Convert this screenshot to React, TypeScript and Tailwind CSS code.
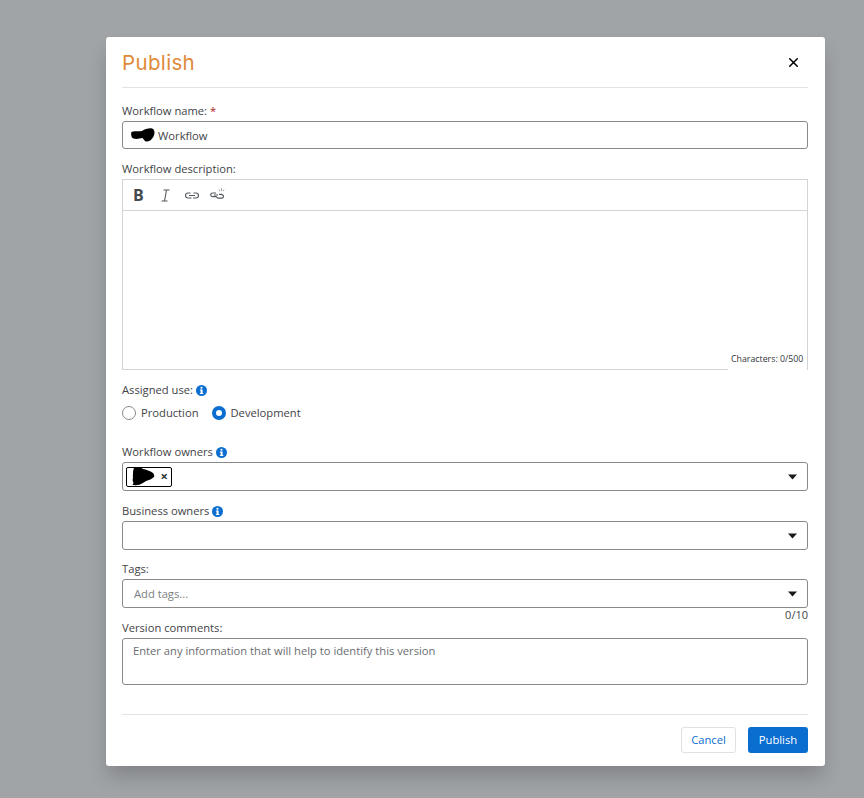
import React from 'react';
import { X } from 'lucide-react';

function Info() {
  return (
    <svg width="11" height="11" viewBox="0 0 12 12" className="shrink-0">
      <circle cx="6" cy="6" r="6" fill="#0a6ed1" />
      <rect x="5" y="5" width="2.2" height="4.6" fill="#fff" />
      <rect x="4.2" y="5" width="2" height="1" fill="#fff" />
      <rect x="4.2" y="8.8" width="3.8" height="1" fill="#fff" />
      <circle cx="6" cy="3" r="1.2" fill="#fff" />
    </svg>
  );
}

function Caret() {
  return (
    <svg width="9" height="6" viewBox="0 0 9 6" className="shrink-0">
      <path d="M0 0.5h9L4.5 5.5z" fill="#1a1a1a" />
    </svg>
  );
}

function Label({ children, className = '' }: { children: React.ReactNode; className?: string }) {
  return <div className={`flex items-center gap-[3px] h-4 text-[11.2px] leading-4 text-[#3f4347] ${className}`}>{children}</div>;
}

function SelectBox({ height, children }: { height: string; children?: React.ReactNode }) {
  return (
    <div className={`flex items-center justify-between rounded-[3px] border border-[#87898b] pl-[3px] pr-[10px] ${height}`}>
      <div className="flex items-center min-w-0">{children}</div>
      <Caret />
    </div>
  );
}

export default function App() {
  return (
    <div className="h-[798px] w-[864px] overflow-hidden bg-[#a1a4a7] pl-[106px] pt-[37px] font-['Open_Sans',sans-serif]">
      <div className="h-[729px] w-[719px] rounded-[3px] bg-white pl-4 pr-[17px] shadow-[0_12px_20px_-2px_rgba(0,0,0,0.2)]">
        <div className="flex h-[51px] items-center justify-between border-b border-[#e2e3e4]">
          <span className="pt-[3px] font-['Inter',sans-serif] text-[20.5px] leading-none tracking-[0.35px] text-[#e08a3c]">Publish</span>
          <X className="mr-[7px] h-[15px] w-[15px] text-black" strokeWidth={2.4} />
        </div>

        <Label className="mt-[15px]">
          <span>Workflow name:</span>
          <span className="text-[#b0191c]">*</span>
        </Label>
        <div className="mt-[2px] flex h-7 items-center rounded-[3px] border border-[#87898b] pl-2 pt-[2px] text-[11.2px] text-[#3f4347]">
          <svg width="24" height="14" viewBox="0 0 24 14" className="mr-[3px] -mt-[3px] shrink-0">
            <path d="M0.5 4C3 2.500 7 4 11 3 14 1 18 0 21 .5c3 1 3 5 1.500 8-1.500 3-4 5-7 5-2 0-2.500-2-4-3.500-3 .5-6 1.500-9 .5C.5 10-.5 6 .5 4z" fill="#000" />
          </svg>
          <span>Workflow</span>
        </div>

        <Label className="mt-3">Workflow description:</Label>
        <div className="relative mt-[2px] h-[191px] border border-[#d2d4d5]">
          <div className="flex h-[31px] items-center border-b border-[#d2d4d5] pl-[10px] text-[#45494d]">
            <span className="w-[11px] text-[16px] font-bold leading-none">B</span>
            <svg width="11" height="13" viewBox="0 0 11 13" className="ml-[16px]">
              <path d="M3.5 1h6M1.5 12h6M6.5 1L4.5 12" stroke="#55595d" strokeWidth="1.1" fill="none" />
            </svg>
            <svg width="14" height="7" viewBox="0 0 14 7" className="ml-[14px] mt-px">
              <path d="M5.5 1H3a2.5 2.5 0 0 0 0 5h3.500M8.500 1H11a2.500 2.500 0 0 1 0 5H8M4 3.500h6" stroke="#55595d" strokeWidth="1.2" fill="none" />
            </svg>
            <svg width="15" height="14" viewBox="0 0 15 14" className="ml-[11px] -mt-[3px]">
              <path d="M6 6H2.500a1.800 1.800 0 0 0 0 3.600H6l2 1.600h3.500a1.800 1.800 0 0 0 1.500-3l-1.500-.8H9M4 8h4" stroke="#55595d" strokeWidth="1.2" fill="none" />
              <path d="M9 2.500l.8 1.800M11.500 1v3M14 2.500l-1.200 1.800" stroke="#9a9c9e" strokeWidth="0.9" fill="none" />
            </svg>
          </div>
          <div className="absolute -bottom-px right-0 h-[20px] w-[79px] bg-white pl-[3px] text-[8.8px] leading-[19px] text-[#32363a]">
            Characters: 0/500
          </div>
        </div>

        <Label className="mt-3">
          <span>Assigned use:</span>
          <Info />
        </Label>
        <div className="mt-[7px] flex h-[16px] items-center text-[11.2px] text-[#3f4347]">
          <span className="h-[14px] w-[14px] rounded-full border border-[#87898b]" />
          <span className="ml-[5px]">Production</span>
          <span className="ml-[13px] h-[14px] w-[14px] rounded-full border-[4px] border-[#0a6ed1] bg-white" />
          <span className="ml-[5px]">Development</span>
        </div>

        <Label className="mt-[23px]">
          <span>Workflow owners</span>
          <Info />
        </Label>
        <div className="mt-[2px]">
          <SelectBox height="h-[29px]">
            <div className="flex h-5 w-[46px] items-center justify-between rounded-[2px] border border-black pr-[3px] text-[#3f4347]">
              <div className="flex items-center">
                <svg width="30" height="19" viewBox="0 0 30 19" className="shrink-0">
                  <path d="M7 1c3-1.500 7-1 9 1 3 .5 7 2 10 4 1 1 1.500 3 1 4-2 2-5 3-8 4-3 2-6 4-9 4-2 .5-3.500 0-4.500 0l1-2-1-3c1-2 0-4 .5-5.500C6 5 6 3 7 1z" fill="#000" />
                </svg>
              </div>
              <span className="text-[13px] font-bold leading-none text-[#333]">×</span>
            </div>
          </SelectBox>
        </div>

        <Label className="mt-3">
          <span>Business owners</span>
          <Info />
        </Label>
        <div className="mt-[2px]">
          <SelectBox height="h-[29px]" />
        </div>

        <Label className="mt-[11px]">Tags:</Label>
        <div className="mt-[2px]">
          <SelectBox height="h-[29px]">
            <span className="pl-2 pt-px text-[11.2px] text-[#7b7e81]">Add tags...</span>
          </SelectBox>
        </div>
        <div className="h-[13px] text-right text-[11px] leading-[14px] text-[#3f4347]">0/10</div>

        <Label className="-mt-[1px]">Version comments:</Label>
        <div className="mt-[2px] h-[47px] rounded-[3px] border border-[#87898b] px-[10px] pt-[4px] text-[11.2px] leading-4 text-[#6a6d70]">
          Enter any information that will help to identify this version
        </div>

        <div className="mt-[29px] flex justify-end gap-3 border-t border-[#e2e3e4] pt-3">
          <button className="h-[26px] w-[55px] rounded-[3px] border border-[#dfe1e2] bg-white text-[11.2px] text-[#0a6ed1]">Cancel</button>
          <button className="h-[26px] w-[60px] rounded-[3px] bg-[#0a6ed1] text-[11.2px] text-white">Publish</button>
        </div>
      </div>
    </div>
  );
}
